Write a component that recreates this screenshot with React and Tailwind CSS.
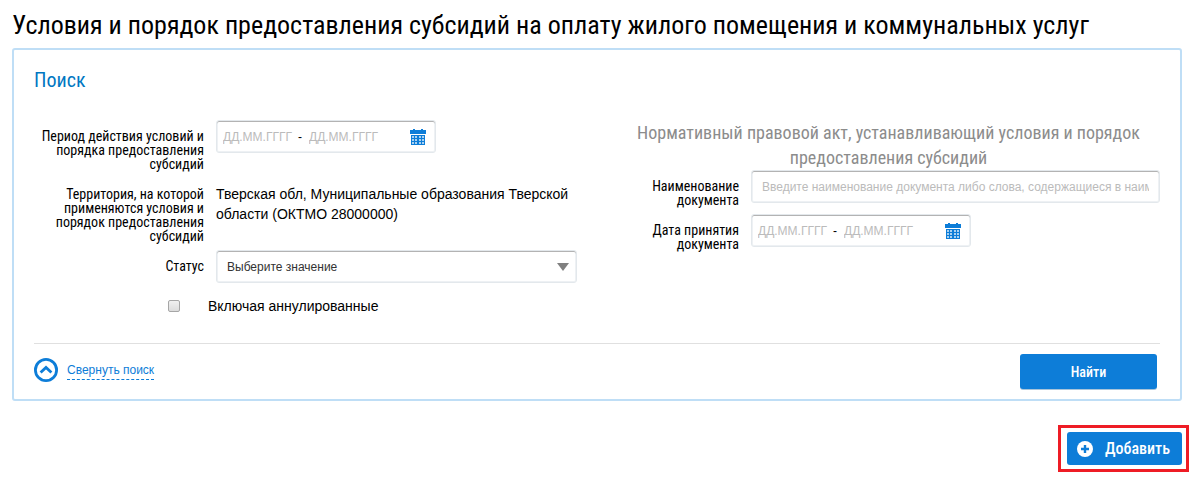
import { useState } from "react";

const CalendarIcon = () => (
  <svg
    xmlns="http://www.w3.org/2000/svg"
    viewBox="0 0 16 16"
    className="size-4"
    fill="#0d7dd8"
    shapeRendering="crispEdges"
  >
    <path d="M3 0h2v1h6V0h2v1h3v4H0V1h3z" />
    <path d="M1 6h14v10H1z" />
    <path
      fill="#a9d1f1"
      d="M2 7h2v2H2zM5 7h2v2H5zM9 7h2v2H9zM12 7h2v2h-2zM2 10h2v2H2zM5 10h2v2H5zM9 10h2v2H9zM12 10h2v2h-2zM2 13h2v2H2zM5 13h2v2H5zM9 13h2v2H9zM12 13h2v2h-2z"
    />
  </svg>
);

const Label = ({ htmlFor, children }) => (
  <label
    htmlFor={htmlFor}
    className="pt-[9px] text-right font-['Roboto_Condensed','Liberation_Sans_Narrow',sans-serif] text-sm leading-[14px]"
  >
    {children}
  </label>
);

const DateRange = ({ id, label }) => {
  const [range, setRange] = useState({ from: "", to: "" });

  return (
    <div className="flex h-[33px] w-[220px] items-center rounded-[3px] border border-[#e3e8ec] bg-white px-[6px] pt-px text-xs shadow-[inset_0_1px_0_#b3b3b3,inset_0_0_0_1px_#eef1f4]">
      <input
        id={id}
        type="text"
        placeholder="ДД.ММ.ГГГГ"
        value={range.from}
        onChange={(e) => setRange({ ...range, from: e.target.value })}
        className="w-[75px] outline-none placeholder:text-[#bbbbbb]"
      />
      <span className="w-[11px]">-</span>
      <input
        type="text"
        aria-label={label}
        placeholder="ДД.ММ.ГГГГ"
        value={range.to}
        onChange={(e) => setRange({ ...range, to: e.target.value })}
        className="w-[75px] outline-none placeholder:text-[#bbbbbb]"
      />
      <button type="button" aria-label="Календарь" className="mr-[3px] ml-auto">
        <CalendarIcon />
      </button>
    </div>
  );
};

export default function App() {
  const [name, setName] = useState("");
  const [withCancelled, setWithCancelled] = useState(false);

  return (
    <main className="bg-white pt-2 pr-[6px] pl-3 font-['Liberation_Sans',sans-serif] text-black">
      <h1 className="font-['Roboto_Condensed','Liberation_Sans_Narrow',sans-serif] text-[26px] leading-[34px]">
        Условия и порядок предоставления субсидий на оплату жилого помещения и
        коммунальных услуг
      </h1>

      <form
        onSubmit={(e) => e.preventDefault()}
        className="mt-[6px] mr-[7px] rounded-[3px] border-2 border-[#bfdef6] px-5 pt-[18px] pb-[10px]"
      >
        <h2 className="font-['Roboto_Condensed','Liberation_Sans_Narrow',sans-serif] text-xl leading-6 text-[#0077c2]">
          Поиск
        </h2>

        <div className="mt-7 grid grid-cols-2 gap-10">
          <div>
            <div className="grid grid-cols-[170px_1fr] gap-x-3">
              <Label htmlFor="period">
                Период действия условий и порядка предоставления субсидий
              </Label>
              <DateRange id="period" label="Окончание периода действия" />
            </div>

            <div className="mt-[7px] grid grid-cols-[170px_1fr] gap-x-3">
              <div className="pt-[9px] text-right font-['Roboto_Condensed','Liberation_Sans_Narrow',sans-serif] text-sm leading-[14px]">
                Территория, на которой применяются условия и порядок
                предоставления субсидий
              </div>
              <div className="pt-[6px] text-sm leading-5">
                Тверская обл, Муниципальные образования Тверской области (ОКТМО
                28000000)
              </div>
            </div>

            <div className="mt-[7px] grid grid-cols-[170px_1fr] gap-x-3">
              <Label htmlFor="status">Статус</Label>
              <div className="relative">
                <select
                  id="status"
                  className="h-[33px] w-full appearance-none rounded-[3px] border border-[#e3e8ec] bg-white px-[10px] text-xs text-[#333333] shadow-[inset_0_1px_0_#b3b3b3,inset_0_0_0_1px_#eef1f4]"
                >
                  <option>Выберите значение</option>
                </select>
                <svg
                  viewBox="0 0 12 8"
                  className="pointer-events-none absolute top-[13px] right-2 h-2 w-3"
                  fill="#808080"
                >
                  <path d="M0 0h12L6 8z" />
                </svg>
              </div>
            </div>

            <div className="mt-[13px] flex items-center pl-[134px]">
              <input
                id="cancelled"
                type="checkbox"
                checked={withCancelled}
                onChange={(e) => setWithCancelled(e.target.checked)}
                className="size-3 appearance-none rounded-[2px] border border-[#a6a6a6] bg-linear-to-b from-[#f0f0f0] to-[#dcdcdc] checked:from-[#0d7dd8] checked:to-[#0d7dd8]"
              />
              <label htmlFor="cancelled" className="pl-7 text-sm leading-5">
                Включая аннулированные
              </label>
            </div>
          </div>

          <div>
            <h3 className="text-center font-['Roboto_Condensed','Liberation_Sans_Narrow',sans-serif] text-lg leading-[25px] text-[#8c8c8c]">
              Нормативный правовой акт, устанавливающий условия и порядок
              предоставления субсидий
            </h3>

            <div className="grid grid-cols-[122px_1fr] gap-x-3">
              <Label htmlFor="docName">Наименование документа</Label>
              <input
                id="docName"
                type="text"
                placeholder="Введите наименование документа либо слова, содержащиеся в наименовании"
                value={name}
                onChange={(e) => setName(e.target.value)}
                className="h-[33px] w-full rounded-[3px] border border-[#e3e8ec] px-[10px] text-xs shadow-[inset_0_1px_0_#b3b3b3,inset_0_0_0_1px_#eef1f4] outline-none placeholder:text-[#bbbbbb]"
              />
            </div>

            <div className="mt-[7px] grid grid-cols-[122px_1fr] gap-x-3">
              <Label htmlFor="docDate">Дата принятия документа</Label>
              <DateRange id="docDate" label="Окончание периода принятия" />
            </div>
          </div>
        </div>

        <div className="mt-[27px] flex items-start justify-between border-t border-[#e0e0e0] pt-[10px] pr-[3px]">
          <a href="#search" className="mt-1 flex items-center text-[#0d7dd8]">
            <svg
              viewBox="0 0 24 24"
              className="mr-[9px] size-6"
              fill="none"
              stroke="currentColor"
            >
              <circle cx="12" cy="12" r="10.6" strokeWidth="2.8" />
              <path d="M6.6 14.6l5.4-5.2 5.4 5.2" strokeWidth="2.8" />
            </svg>
            <span className="border-b border-dashed border-[#0d7dd8] text-xs leading-[18px]">
              Свернуть поиск
            </span>
          </a>
          <button
            type="submit"
            className="h-[35px] w-[137px] rounded-[3px] bg-[#0d7dd8] font-['Roboto_Condensed','Liberation_Sans_Narrow',sans-serif] text-sm font-medium text-white shadow-[0_1px_0_#a8c4da]"
          >
            Найти
          </button>
        </div>
      </form>

      <div className="mt-6 flex justify-end">
        <div className="border-3 border-[#ee1c25] p-1 pl-[6px]">
          <button
            type="button"
            className="flex h-[33px] w-[115px] items-center rounded-[3px] bg-[#0d7dd8] pl-[10px] font-['Roboto_Condensed','Liberation_Sans_Narrow',sans-serif] text-base font-medium text-white"
          >
            <svg viewBox="0 0 16 16" className="mr-3 size-4">
              <circle cx="8" cy="8" r="8" fill="#ffffff" />
              <path d="M8 4v8M4 8h8" stroke="#0d7dd8" strokeWidth="2.4" />
            </svg>
            Добавить
          </button>
        </div>
      </div>
    </main>
  );
}
